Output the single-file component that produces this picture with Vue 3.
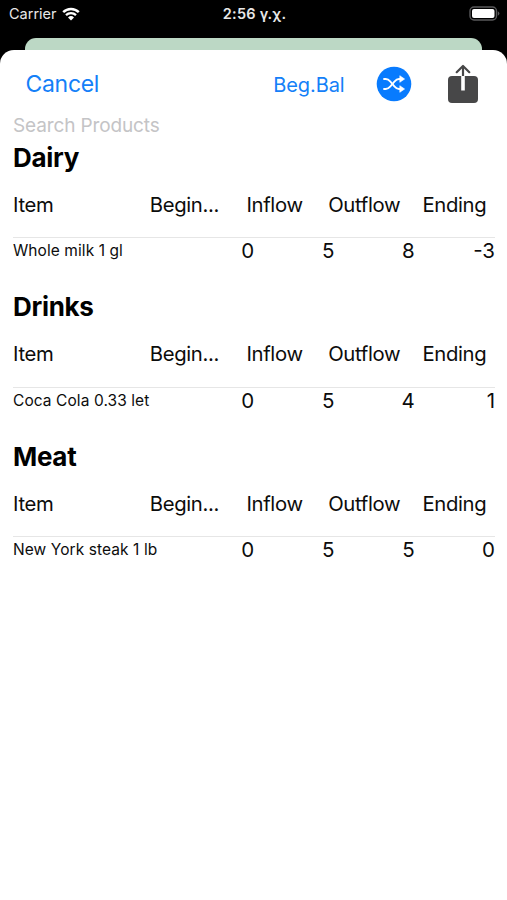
<script setup>

import { ref, computed } from 'vue';

/**
 * The search query.
 */
const search = ref('');

/**
 * The table headings.
 */
const headings = ['Item', 'Begin...', 'Inflow', 'Outflow', 'Ending'];

/**
 * The product categories.
 */
const categories = ref([
    { name: 'Dairy', items: [{ name: 'Whole milk 1 gl', values: [0, 5, 8, -3] }] },
    { name: 'Drinks', items: [{ name: 'Coca Cola 0.33 let', values: [0, 5, 4, 1] }] },
    { name: 'Meat', items: [{ name: 'New York steak 1 lb', values: [0, 5, 5, 0] }] },
]);

/**
 * The categories that match the search query.
 */
const visibleCategories = computed(() => {
    const query = search.value.toLowerCase();

    return categories.value
        .map(c => ({ ...c, items: c.items.filter(i => i.name.toLowerCase().includes(query)) }))
        .filter(c => c.items.length > 0);
});

</script>

<template>
    <div class="phone">
        <header class="statusBar">
            <div class="carrier">
                <span>Carrier</span>
                <svg width="18" height="14" viewBox="0 0 18 14">
                    <path d="M1.2 5.1a11.2 11.2 0 0 1 15.6 0" fill="none" stroke="#fff" stroke-width="2.5" />
                    <path d="M4 8.2a7.2 7.2 0 0 1 10 0" fill="none" stroke="#fff" stroke-width="2.3" />
                    <path d="M9 13.5l-3-3.1a4.3 4.3 0 0 1 6 0z" fill="#fff" />
                </svg>
            </div>
            <span class="clock">2:56 γ.χ.</span>
            <svg class="battery" width="31" height="15" viewBox="0 0 31 15">
                <rect x="1" y="1" width="26.5" height="13" rx="4" fill="none" stroke="#59595b" stroke-width="1.4" />
                <rect x="3" y="3" width="22.5" height="9" rx="2" fill="#fff" />
                <path d="M28.8 5.2q1.6.7 1.6 2.3t-1.6 2.3z" fill="#59595b" />
            </svg>
        </header>

        <div class="backCard"></div>

        <main class="sheet">
            <nav class="toolbar">
                <button class="cancel">Cancel</button>
                <button class="balance">Beg.Bal</button>
                <button class="shuffle" aria-label="Shuffle">
                    <svg width="36" height="36" viewBox="0 0 36 36">
                        <circle cx="18" cy="18" r="17.3" fill="#087bfe" />
                        <g fill="none" stroke="#fff" stroke-width="1.8" stroke-linecap="round">
                            <path d="M8 13h1.8c2.2 0 3.4 1.2 4.6 2.6l4 4.8c1.2 1.4 2.4 2.6 4.6 2.6h1.5" />
                            <path d="M8 23h1.8c2.2 0 3.4-1.2 4.6-2.6l4-4.8c1.2-1.4 2.4-2.6 4.6-2.6h1.5" />
                        </g>
                        <path d="M23.8 9.7l4.8 3.3-4.8 3.3zM23.8 19.7l4.8 3.3-4.8 3.3z" fill="#fff" stroke="#fff" stroke-width=".6" stroke-linejoin="round" />
                    </svg>
                </button>
                <button class="share" aria-label="Share">
                    <svg width="32" height="40" viewBox="0 0 32 40">
                        <rect x="1" y="12" width="30" height="27" rx="4" fill="#474748" />
                        <path d="M16 12v14.5" stroke="#fff" stroke-width="3.6" />
                        <path d="M16 12v-9.5" stroke="#474748" stroke-width="2.2" />
                        <path d="M9.7 8.2L16 2l6.3 6.2" fill="none" stroke="#474748" stroke-width="2.2" stroke-linecap="round" stroke-linejoin="round" />
                    </svg>
                </button>
            </nav>

            <input v-model="search" class="search" type="text" placeholder="Search Products">

            <section v-for="category in visibleCategories" :key="category.name" class="category">
                <h2>{{ category.name }}</h2>
                <div class="headings">
                    <span v-for="heading in headings" :key="heading">{{ heading }}</span>
                </div>
                <div v-for="item in category.items" :key="item.name" class="item">
                    <span class="itemName">{{ item.name }}</span>
                    <span v-for="(value, index) in item.values" :key="index" class="value">{{ value }}</span>
                </div>
            </section>
        </main>
    </div>
</template>

<style>
    body {
        background: #000;
    }
</style>

<style scoped>
    .phone {
        display: flex;
        flex-direction: column;
        height: 900px;
        background: #000;
        color: #0c0c0c;
        font-family: Inter, "Liberation Sans", sans-serif;
        overflow: hidden;
    }

    .statusBar {
        display: grid;
        grid-template-columns: 1fr auto 1fr;
        align-items: center;
        height: 27px;
        padding: 0 7px 0 9px;
        color: #e8e8e8;
        font-size: 14.5px;
    }

    .carrier {
        display: flex;
        align-items: center;
        gap: 5px;
    }

    .clock {
        font-weight: 600;
        letter-spacing: 0.3px;
    }

    .battery {
        justify-self: end;
    }

    .backCard {
        flex: none;
        height: 12px;
        margin: 11px 25px 0;
        border-radius: 11px 11px 0 0;
        background: #bcd8c5;
    }

    .sheet {
        flex: 1;
        padding: 0 12px 0 13px;
        border-radius: 14px 14px 0 0;
        background: #fff;
    }

    .toolbar {
        display: flex;
        align-items: center;
        height: 68px;
        padding: 0 16px 0 12.5px;
    }

    button {
        padding: 0;
        border: none;
        background: none;
        color: #1480f8;
        font-family: inherit;
        line-height: 1;
    }

    button svg {
        display: block;
    }

    .cancel {
        margin-right: auto;
        font-size: 23px;
        letter-spacing: -0.3px;
    }

    .balance {
        margin-right: 31.5px;
        padding-top: 1px;
        font-size: 20px;
        letter-spacing: -0.1px;
    }

    .shuffle {
        margin-right: 35px;
    }

    .search {
        display: block;
        width: 100%;
        height: 21px;
        margin: -3px 0 3px;
        padding: 0;
        border: none;
        outline: none;
        background: none;
        font-family: inherit;
        font-size: 19px;
        letter-spacing: -0.13px;
    }

    .search::placeholder {
        color: #c4c4c6;
        opacity: 1;
    }

    .category {
        padding-bottom: 28.3px;
    }

    h2 {
        margin: 0;
        color: #000;
        font-size: 26px;
        font-weight: 700;
        letter-spacing: -0.3px;
        line-height: 38px;
    }

    .headings {
        display: grid;
        grid-template-columns: 136.8px 96.7px 81.7px 94.3px auto;
        height: 60.4px;
        border-bottom: 1px solid #e6e6e6;
        font-size: 20.3px;
        letter-spacing: -0.35px;
        line-height: 55.6px;
        white-space: nowrap;
    }

    .item {
        display: grid;
        grid-template-columns: 1fr repeat(4, 80.3px);
        align-items: center;
        height: 21.6px;
    }

    .itemName {
        font-size: 15.5px;
        letter-spacing: 0.08px;
        white-space: nowrap;
    }

    .value {
        font-size: 20.5px;
        text-align: right;
    }
</style>
